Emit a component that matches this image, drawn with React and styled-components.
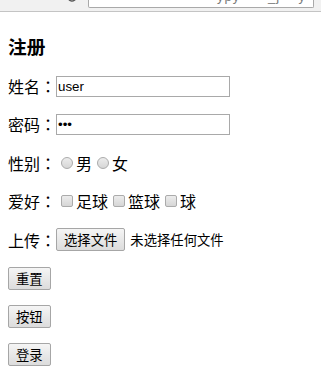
import React from "react";
import styled, { createGlobalStyle } from "styled-components";

const Global = createGlobalStyle`
  html, body {
    margin: 0;
    padding: 0;
    background: #ffffff;
  }
  body {
    font-family: "Noto Sans CJK SC", "Liberation Sans", sans-serif;
    font-size: 16px;
    color: #000;
  }
`;

// browser chrome strip cut off at the top of the shot
const Toolbar = styled.div`
  height: 11px;
  background: #f1f1f1;
  border-bottom: 1px solid #c4c4c4;
  display: flex;
  align-items: flex-start;
  overflow: hidden;
`;

const ReloadIcon = styled.svg`
  margin-left: 66px;
  margin-top: -9px;
  flex: none;
`;

const UrlBox = styled.div`
  margin-left: 10px;
  width: 224px;
  height: 7px;
  background: #fff;
  border: 1px solid #a9a9a9;
  border-top: none;
  border-radius: 0 0 2px 2px;
  overflow: hidden;
  flex: none;
`;

const UrlText = styled.div`
  font-family: "Liberation Sans", sans-serif;
  font-size: 13px;
  line-height: 13px;
  color: #7a7a7a;
  margin-top: -10px;
  padding-left: 128px;
  white-space: nowrap;
  letter-spacing: 1px;
`;

const Main = styled.main`
  padding: 0 8px;
`;

const Title = styled.h3`
  margin: 22px 0 17px;
  font-size: 18.72px;
  line-height: 24px;
  font-weight: bold;
`;

const Form = styled.form`
  display: flex;
  flex-direction: column;
  gap: 16px;
`;

const Row = styled.div`
  height: 22.4px;
  display: flex;
  align-items: center;
`;

const Label = styled.span`
  line-height: 22.4px;
  white-space: nowrap;
`;

// full-width colon sits centred in its cell, as in the traditional forms
const Colon = styled.span`
  font-family: "Noto Sans CJK TC", "Noto Sans CJK SC", sans-serif;
`;

const TextInput = styled.input`
  box-sizing: border-box;
  width: 174px;
  height: 21px;
  margin: 0;
  padding: 0 1px;
  border: 1px solid #a9a9a9;
  font-family: "Liberation Sans", sans-serif;
  font-size: 13.33px;
  color: #000;
  background: #fff;
  outline: none;
`;

const Choice = styled.input`
  appearance: none;
  box-sizing: border-box;
  width: 12px;
  height: 12px;
  margin: 0 3px 0 5px;
  border: 1px solid #ababab;
  border-radius: ${(p) => (p.type === "radio" ? "50%" : "2px")};
  background: linear-gradient(#ececec, #d6d6d6);
  flex: none;
`;

const Button = styled.button`
  box-sizing: border-box;
  height: 23px;
  margin: 0;
  padding: 0 7px;
  border: 1px solid #a6a6a6;
  border-radius: 2px;
  background: linear-gradient(#f5f5f5, #dcdcdc);
  font-family: "Noto Sans CJK SC", sans-serif;
  font-size: 13.33px;
  line-height: 21px;
  color: #000;
  flex: none;
`;

const FileNote = styled.span`
  margin-left: 5px;
  font-size: 13.33px;
  line-height: 22px;
  white-space: nowrap;
`;

const FieldLabel = ({ children }) => (
  <Label>
    {children}
    <Colon>：</Colon>
  </Label>
);

export default function App() {
  return (
    <>
      <Global />
      <Toolbar>
        <ReloadIcon width="12" height="12" viewBox="0 0 12 12">
          <path
            d="M10 6a4 4 0 1 1-1.2-2.85"
            fill="none"
            stroke="#5a5a5a"
            strokeWidth="1.4"
          />
        </ReloadIcon>
        <UrlBox>
          <UrlText>ypy &nbsp;&nbsp;&nbsp;&nbsp;&nbsp;_j &nbsp;&nbsp;&nbsp;y</UrlText>
        </UrlBox>
      </Toolbar>
      <Main>
        <Title>注册</Title>
        <Form onSubmit={(e) => e.preventDefault()}>
          <Row>
            <FieldLabel>姓名</FieldLabel>
            <TextInput type="text" defaultValue="user" />
          </Row>
          <Row>
            <FieldLabel>密码</FieldLabel>
            <TextInput type="password" defaultValue="123" />
          </Row>
          <Row>
            <FieldLabel>性别</FieldLabel>
            <Choice type="radio" name="sex" />
            <Label>男</Label>
            <Choice type="radio" name="sex" />
            <Label>女</Label>
          </Row>
          <Row>
            <FieldLabel>爱好</FieldLabel>
            <Choice type="checkbox" />
            <Label>足球</Label>
            <Choice type="checkbox" />
            <Label>篮球</Label>
            <Choice type="checkbox" />
            <Label>球</Label>
          </Row>
          <Row>
            <FieldLabel>上传</FieldLabel>
            <Button type="button">选择文件</Button>
            <FileNote>未选择任何文件</FileNote>
          </Row>
          <Row>
            <Button type="reset">重置</Button>
          </Row>
          <Row>
            <Button type="button">按钮</Button>
          </Row>
          <Row>
            <Button type="submit">登录</Button>
          </Row>
        </Form>
      </Main>
    </>
  );
}
